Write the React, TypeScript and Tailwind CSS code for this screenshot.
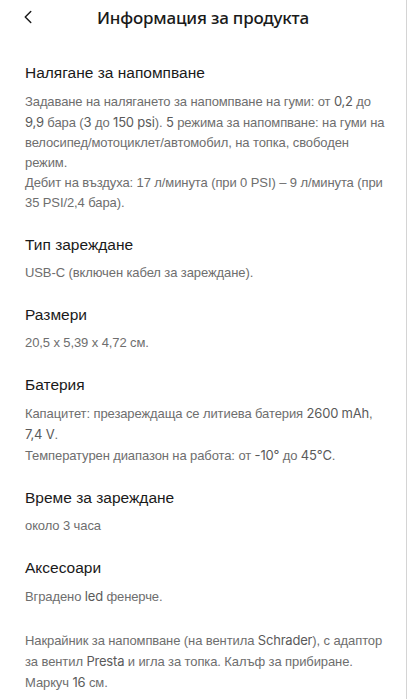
import { ChevronLeft } from 'lucide-react'
import type { ReactNode } from 'react'

interface Section {
  title: string
  body: ReactNode
}

// latin / numeric fragments come out a touch heavier in the product copy
const L = ({ children }: { children: ReactNode }) => (
  <span className="font-['Inter'] text-[#5a5a5a] tracking-[-0.2px]">{children}</span>
)

const sections: Section[] = [
  {
    title: 'Налягане за напомпване',
    body: (
      <>
        <p>
          Задаване на налягането за напомпване на гуми: от <L>0,2</L> до <L>9,9</L> бара (<L>3</L> до{' '}
          <L>150 psi</L>). <L>5</L> режима за напомпване: на гуми на велосипед/мотоциклет/автомобил, на
          топка, свободен режим.
        </p>
        <p>Дебит на въздуха: 17 л/минута (при 0 PSI) – 9 л/минута (при 35 PSI/2,4 бара).</p>
      </>
    ),
  },
  {
    title: 'Тип зареждане',
    body: <p>USB-C (включен кабел за зареждане).</p>,
  },
  {
    title: 'Размери',
    body: <p>20,5 x 5,39 x 4,72 см.</p>,
  },
  {
    title: 'Батерия',
    body: (
      <>
        <p>
          Капацитет: презареждаща се литиева батерия <L>2600 mAh</L>, <L>7,4 V</L>.
        </p>
        <p>
          Температурен диапазон на работа: от <L>-10°</L> до <L>45°C</L>.
        </p>
      </>
    ),
  },
  {
    title: 'Време за зареждане',
    body: <p>около 3 часа</p>,
  },
  {
    title: 'Аксесоари',
    body: (
      <>
        <p>
          Вградено <L>led</L> фенерче.
        </p>
        <p className="mt-[23px]">
          Накрайник за напомпване (на вентила <L>Schrader</L>), с адаптор за вентил <L>Presta</L> и
          игла за топка. Калъф за прибиране. Маркуч <L>16</L> см.
        </p>
      </>
    ),
  },
]

export default function App() {
  return (
    <div className="min-h-screen bg-white border-r border-[#d4d4d4] font-['Liberation_Sans',Arial,sans-serif]">
      <header className="relative h-[35px] flex items-center justify-center">
        <button type="button" className="absolute left-[17px] top-[6px] text-[#1a1a1a]">
          <ChevronLeft className="w-[22px] h-[22px]" strokeWidth={1.6} />
        </button>
        <h1 lang="bg" className="text-[17px] font-medium text-[#1a1a1a] font-['Noto_Sans',sans-serif] tracking-[-0.2px]">
          Информация за продукта
        </h1>
      </header>

      <main className="pl-[25px] pr-[14px] pt-[26px] pb-6 flex flex-col gap-[20px]">
        {sections.map(s => (
          <section key={s.title}>
            <h2 className="text-[15.5px] leading-[24px] text-[#1a1a1a] mb-[6px]">{s.title}</h2>
            <div className="text-[13px] leading-[20px] text-[#6e6e6e] tracking-[-0.1px]">{s.body}</div>
          </section>
        ))}
      </main>
    </div>
  )
}
